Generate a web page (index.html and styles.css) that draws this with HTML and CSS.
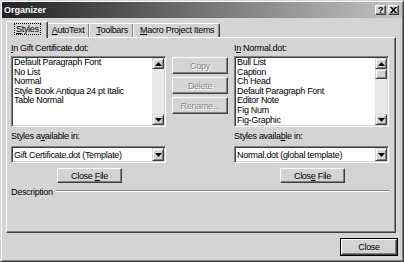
FILE: index.html
```html
<!DOCTYPE html>
<html lang="en">
<head>
	<meta charset="utf-8">
	<title>Organizer</title>
	<link rel="stylesheet" href="styles.css">
</head>
<body>
	<div class="dialog">
		<div class="titlebar">
			<span class="title">Organizer</span>
			<span class="tbtn">?</span>
			<span class="tbtn">
				<svg width="7" height="6" viewBox="0 0 7 6"><path d="M0 0h2l1.5 2L5 0h2L4.5 3L7 6H5L3.5 4L2 6H0l2.5-3z" fill="#000"/></svg>
			</span>
		</div>

		<div class="tabs">
			<div class="tab active"><span class="focus"><u>S</u>tyles</span></div>
			<div class="tab"><u>A</u>utoText</div>
			<div class="tab"><u>T</u>oolbars</div>
			<div class="tab"><u>M</u>acro Project Items</div>
		</div>

		<div class="panel">
			<div class="cols">
				<div class="col">
					<div class="label"><u>I</u>n Gift Certificate.dot:</div>
					<div class="list">
						<ul>
							<li>Default Paragraph Font</li>
							<li>No List</li>
							<li>Normal</li>
							<li>Style Book Antiqua 24 pt Italic</li>
							<li>Table Normal</li>
						</ul>
						<div class="vscroll">
							<span class="arrow"><svg width="7" height="4" viewBox="0 0 7 4"><path d="M3.5 0L7 4H0z"/></svg></span>
							<span class="track"></span>
							<span class="arrow"><svg width="7" height="4" viewBox="0 0 7 4"><path d="M0 0h7L3.5 4z"/></svg></span>
						</div>
					</div>
					<div class="label">Styles a<u>v</u>ailable in:</div>
					<div class="combo">
						<span class="value">Gift Certificate.dot (Template)</span>
						<span class="arrow"><svg width="7" height="4" viewBox="0 0 7 4"><path d="M0 0h7L3.5 4z"/></svg></span>
					</div>
					<button class="btn file">Close <u>F</u>ile</button>
				</div>

				<div class="mid">
					<button class="btn" disabled>Copy</button>
					<button class="btn" disabled>Delete</button>
					<button class="btn" disabled>Rename...</button>
				</div>

				<div class="col">
					<div class="label">I<u>n</u> Normal.dot:</div>
					<div class="list">
						<ul>
							<li>Bull List</li>
							<li>Caption</li>
							<li>Ch Head</li>
							<li>Default Paragraph Font</li>
							<li>Editor Note</li>
							<li>Fig Num</li>
							<li>Fig-Graphic</li>
						</ul>
						<div class="vscroll">
							<span class="arrow"><svg width="7" height="4" viewBox="0 0 7 4"><path d="M3.5 0L7 4H0z"/></svg></span>
							<span class="thumb"></span>
							<span class="track"></span>
							<span class="arrow"><svg width="7" height="4" viewBox="0 0 7 4"><path d="M0 0h7L3.5 4z"/></svg></span>
						</div>
					</div>
					<div class="label">Styles availa<u>b</u>le in:</div>
					<div class="combo">
						<span class="value">Normal.dot (global template)</span>
						<span class="arrow"><svg width="7" height="4" viewBox="0 0 7 4"><path d="M0 0h7L3.5 4z"/></svg></span>
					</div>
					<button class="btn file">Clos<u>e</u> File</button>
				</div>
			</div>

			<div class="desc">
				<span>Description</span>
				<span class="rule"></span>
			</div>
		</div>

		<div class="footer">
			<button class="btn default">Close</button>
		</div>
	</div>
</body>
</html>
```

FILE: styles.css
```css
body{
	margin: 0;
	background-color: #d4d4d4;
	font-family: "Liberation Sans", Arial, sans-serif;
	font-size: 9px;
	letter-spacing: -0.3px;
	color: #000;
}

u{
	text-decoration-thickness: 1px;
	text-underline-offset: 1px;
}

.dialog{
	box-sizing: border-box;
	width: 404px;
	height: 262px;
	padding: 1px;
	border: 1px solid;
	border-color: #d4d4d4 #404040 #404040 #d4d4d4;
	box-shadow: inset 1px 1px #fff, inset -1px -1px #808080;
	display: flex;
	flex-direction: column;
}

.titlebar{
	height: 16px;
	background: linear-gradient(to right, #222222, #c4c4c4);
	display: flex;
	align-items: center;
	padding: 0 3px 0 2px;
}

.title{
	flex: 1;
	color: #fff;
	font-weight: bold;
	letter-spacing: 0;
}

.tbtn{
	box-sizing: border-box;
	width: 11px;
	height: 10px;
	margin-left: 2px;
	background-color: #d4d4d4;
	border: 1px solid;
	border-color: #fff #404040 #404040 #fff;
	box-shadow: inset -1px -1px #808080;
	display: flex;
	align-items: center;
	justify-content: center;
	font-weight: bold;
	font-size: 9px;
	line-height: 8px;
}

.tabs{
	height: 19px;
	display: flex;
	align-items: flex-end;
	padding-left: 6px;
}

.tab{
	box-sizing: border-box;
	height: 14px;
	padding: 0 5px 0 6px;
	border: 1px solid;
	border-bottom: none;
	border-color: #fff #404040 #fff #fff;
	border-radius: 2px 2px 0 0;
	box-shadow: inset -1px 0 #808080;
	line-height: 12px;
	margin-left: -1px;
}

.tab.active{
	height: 17px;
	margin: 0 -2px -1px -2px;
	padding: 1px 7px 0 8px;
	background-color: #d4d4d4;
	position: relative;
	z-index: 1;
}

.focus{
	outline: 1px dotted #000;
	outline-offset: 0;
	padding: 0 1px;
}

.panel{
	flex: 1;
	margin: 0 6px 0 4px;
	border: 1px solid;
	border-color: #fff #404040 #404040 #fff;
	box-shadow: inset -1px -1px #808080;
	padding: 4px 6px 0 4px;
}

.cols{
	display: grid;
	grid-template-columns: 155px 56px 155px;
	column-gap: 6px;
}

.col{
	display: flex;
	flex-direction: column;
}

.label{
	line-height: 12px;
	height: 12px;
	margin-bottom: 2px;
}

.list{
	box-sizing: border-box;
	height: 71px;
	background-color: #fff;
	border: 1px solid;
	border-color: #808080 #fff #fff #808080;
	box-shadow: inset 1px 1px #404040, inset -1px -1px #d4d4d4;
	padding: 1px;
	display: flex;
	margin-bottom: 3px;
}

.list ul{
	flex: 1;
	margin: 0;
	padding: 0 0 0 1px;
	list-style: none;
	overflow: hidden;
}

.list li{
	line-height: 9.6px;
	height: 9.6px;
	white-space: nowrap;
}

.vscroll{
	width: 12px;
	display: flex;
	flex-direction: column;
}

.arrow{
	box-sizing: border-box;
	width: 12px;
	height: 11px;
	background-color: #d4d4d4;
	border: 1px solid;
	border-color: #d4d4d4 #404040 #404040 #d4d4d4;
	box-shadow: inset 1px 1px #fff, inset -1px -1px #808080;
	display: flex;
	align-items: center;
	justify-content: center;
}

.thumb{
	box-sizing: border-box;
	height: 10px;
	background-color: #d4d4d4;
	border: 1px solid;
	border-color: #d4d4d4 #404040 #404040 #d4d4d4;
	box-shadow: inset 1px 1px #fff, inset -1px -1px #808080;
}

.track{
	flex: 1;
	background-color: #e9e9e9;
}

.combo{
	box-sizing: border-box;
	height: 17px;
	margin-top: 2px;
	background-color: #fff;
	border: 1px solid;
	border-color: #808080 #fff #fff #808080;
	box-shadow: inset 1px 1px #404040, inset -1px -1px #d4d4d4;
	padding: 1px;
	display: flex;
	align-items: center;
}

.combo .value{
	flex: 1;
	padding-left: 1px;
}

.combo .arrow{
	height: 13px;
}

.btn{
	box-sizing: border-box;
	font: inherit;
	letter-spacing: inherit;
	color: #000;
	background-color: #d4d4d4;
	border: 1px solid;
	border-color: #fff #404040 #404040 #fff;
	box-shadow: inset -1px -1px #808080;
	padding: 0;
	border-radius: 0;
	height: 16px;
}

.btn:disabled{
	color: #8a8a8a;
	text-shadow: 1px 1px #fff;
}

.btn.file{
	width: 65px;
	height: 15px;
	margin: 5px auto 0;
	position: relative;
	left: 1px;
}

.mid{
	display: flex;
	flex-direction: column;
	gap: 3px;
	padding-top: 15px;
}

.mid .btn{
	height: 17px;
}

.desc{
	display: flex;
	align-items: center;
	gap: 3px;
	margin-top: 4px;
}

.desc .rule{
	flex: 1;
	height: 0;
	border-top: 1px solid #808080;
	border-bottom: 1px solid #fff;
	margin-top: -3px;
}

.footer{
	height: 27px;
	display: flex;
	justify-content: flex-end;
	align-items: flex-start;
	padding: 6px 5px 0 0;
	box-sizing: border-box;
}

.btn.default{
	width: 56px;
	height: 16px;
	outline: 1px solid #000;
	outline-offset: 0;
}
```
